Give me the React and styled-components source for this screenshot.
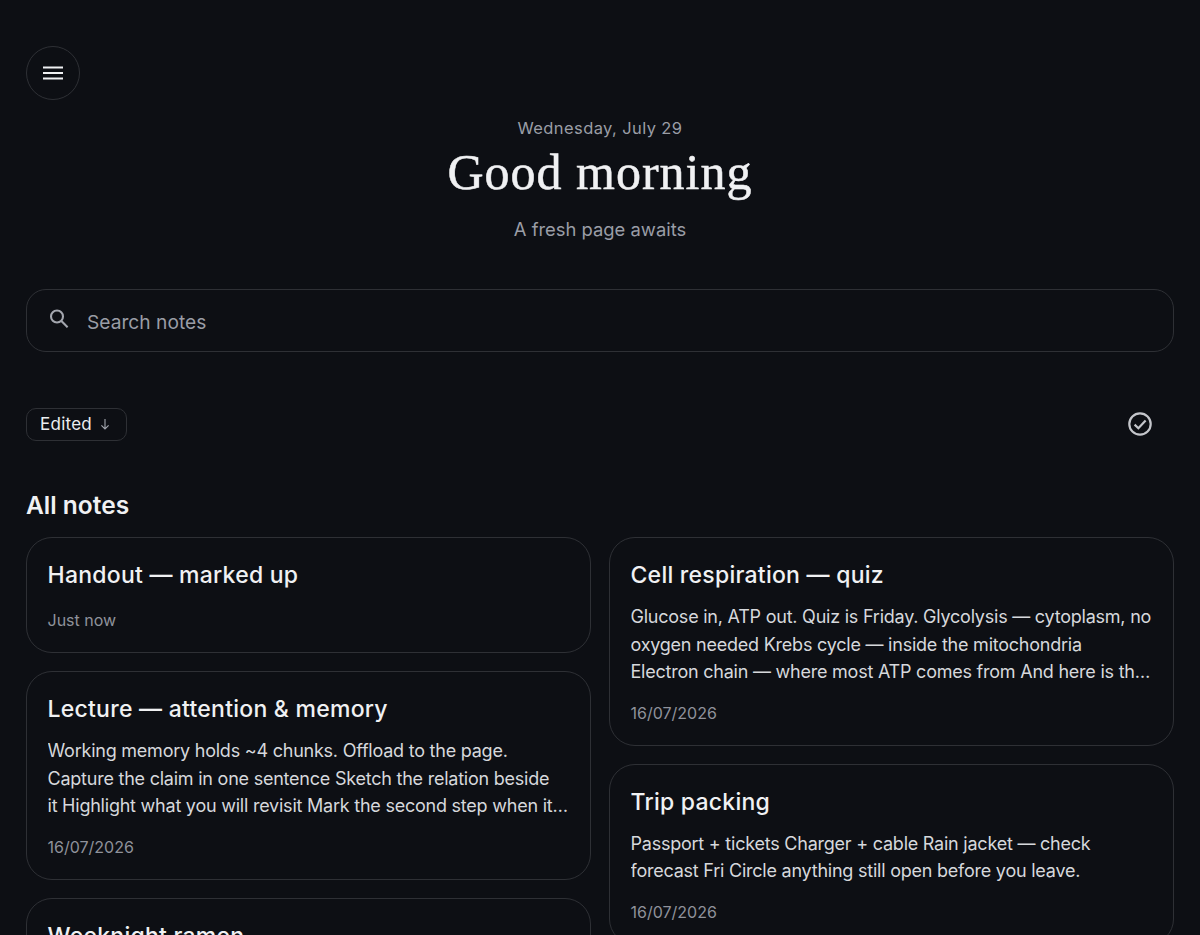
import React from 'react'
import styled, { createGlobalStyle } from 'styled-components'

const GlobalStyle = createGlobalStyle`
  html, body {
    margin: 0;
    height: 935px;
    overflow: hidden;
    background: #0d0f14;
  }
  * { box-sizing: border-box; }
`

const leftNotes = [
  { title: 'Handout — marked up', date: 'Just now' },
  {
    title: 'Lecture — attention & memory',
    body: 'Working memory holds ~4 chunks. Offload to the page. Capture the claim in one sentence Sketch the relation beside it\u00A0Highlight what you will revisit Mark the second step when it matters most',
    date: '16/07/2026',
  },
  {
    title: 'Weeknight ramen',
    body: 'Soft egg, scallions, chili oil. Simmer the broth slowly.',
    date: '16/07/2026',
  },
]

const rightNotes = [
  {
    title: 'Cell respiration — quiz',
    body: 'Glucose in, ATP out. Quiz is Friday. Glycolysis — cytoplasm, no oxygen needed Krebs cycle — inside the mitochondria Electron chain — where most ATP comes from And here is the part I keep forgetting',
    date: '16/07/2026',
  },
  {
    title: 'Trip packing',
    body: 'Passport + tickets Charger + cable Rain jacket — check forecast Fri Circle anything still open before you leave.',
    date: '16/07/2026',
  },
]

export default function App() {
  return (
    <Page>
      <GlobalStyle />
      <MenuButton aria-label="Menu">
        <svg width="20" height="14" viewBox="0 0 20 14" fill="none" stroke="#f0f1f3" strokeWidth="2">
          <path d="M0 1.5h20M0 7h20M0 12.5h20" />
        </svg>
      </MenuButton>
      <Greeting>
        <DateLine>Wednesday, July 29</DateLine>
        <Headline>Good morning</Headline>
        <Tagline>A fresh page awaits</Tagline>
      </Greeting>
      <SearchBar>
        <svg width="24" height="24" viewBox="0 0 24 24" fill="none" stroke="#a3a6ae" strokeWidth="2.1">
          <circle cx="10" cy="9.5" r="6" />
          <path d="M14.4 14l6.2 6.2" />
        </svg>
        <SearchInput placeholder="Search notes" />
      </SearchBar>
      <Toolbar>
        <SortChip>
          Edited
          <svg width="12" height="12" viewBox="0 0 12 12" fill="none" stroke="#a3a6ae" strokeWidth="1.1">
            <path d="M6 1v10M2.4 7.4L6 11l3.6-3.6" />
          </svg>
        </SortChip>
        <SelectButton aria-label="Select">
          <svg width="26" height="26" viewBox="0 0 26 26" fill="none" stroke="#c4c6cb" strokeWidth="2.2">
            <circle cx="13" cy="13" r="10.7" />
            <path d="M7.6 13.6l3.8 3.6 7.2-7.6" />
          </svg>
        </SelectButton>
      </Toolbar>
      <SectionTitle>All notes</SectionTitle>
      <Columns>
        {[leftNotes, rightNotes].map((notes, i) => (
          <Column key={i}>
            {notes.map((note) => (
              <NoteCard key={note.title}>
                <NoteTitle>{note.title}</NoteTitle>
                {note.body && <NoteBody>{note.body}</NoteBody>}
                <NoteDate>{note.date}</NoteDate>
              </NoteCard>
            ))}
          </Column>
        ))}
      </Columns>
    </Page>
  )
}

const Page = styled.main`
  min-height: 935px;
  padding: 46px 26px 0;
  background: #0d0f14;
  color: #eceef0;
  font-family: Inter, "Noto Sans", sans-serif;
`

const MenuButton = styled.button`
  display: flex;
  align-items: center;
  justify-content: center;
  width: 54px;
  height: 54px;
  padding: 0;
  border: 1px solid #2e3035;
  border-radius: 50%;
  background: transparent;
`

const Greeting = styled.header`
  display: flex;
  flex-direction: column;
  align-items: center;
  margin-top: 17px;
`

const DateLine = styled.div`
  font-size: 16.5px;
  line-height: 22px;
  letter-spacing: 0.4px;
  color: #9a9da6;
`

const Headline = styled.h1`
  margin: 5px 0 1px;
  font-family: "Liberation Serif", serif;
  font-size: 50px;
  line-height: 56px;
  font-weight: 400;
  letter-spacing: 1px;
  -webkit-text-stroke: 0.5px #f0f1f3;
  color: #f0f1f3;
`

const Tagline = styled.div`
  margin-top: 16px;
  font-size: 18.4px;
  line-height: 24px;
  color: #9a9da6;
`

const SearchBar = styled.label`
  display: flex;
  align-items: center;
  gap: 16px;
  height: 63px;
  margin-top: 48px;
  padding: 0 20px;
  border: 1px solid #2e3035;
  border-radius: 20px;
  svg { margin-top: -4px; }
`

const SearchInput = styled.input`
  flex: 1;
  padding: 2px 0 0;
  border: 0;
  outline: 0;
  background: transparent;
  color: #eceef0;
  font-family: inherit;
  font-size: 19.2px;
  &::placeholder { color: #9a9da6; opacity: 1; }
`

const Toolbar = styled.div`
  display: flex;
  align-items: center;
  justify-content: space-between;
  margin-top: 56px;
  padding-right: 21px;
`

const SortChip = styled.button`
  display: flex;
  align-items: center;
  gap: 7px;
  height: 33px;
  padding: 0 15px 1px 13px;
  border: 1px solid #2e3035;
  border-radius: 10px;
  background: transparent;
  color: #eceef0;
  font-family: inherit;
  font-size: 17px;
  letter-spacing: 0.25px;
`

const SelectButton = styled.button`
  display: flex;
  padding: 0 0 1px;
  border: 0;
  background: transparent;
`

const SectionTitle = styled.h2`
  margin: 47px 0 0;
  font-size: 24.5px;
  line-height: 34px;
  font-weight: 600;
  color: #f0f1f3;
`

const Columns = styled.div`
  display: grid;
  grid-template-columns: 1fr 1fr;
  gap: 18px;
  margin-top: 15px;
`

const Column = styled.div`
  display: flex;
  flex-direction: column;
  gap: 18px;
`

const NoteCard = styled.article`
  padding: 20px 21px 21px 20.5px;
  border: 1px solid #2e3035;
  border-radius: 26px;
`

const NoteTitle = styled.h3`
  margin: 0;
  font-size: 23px;
  line-height: 34px;
  font-weight: 500;
  letter-spacing: 0.25px;
  color: #f0f1f3;
`

const NoteBody = styled.p`
  display: -webkit-box;
  -webkit-box-orient: vertical;
  -webkit-line-clamp: 3;
  overflow: hidden;
  margin: 11px 0 0;
  font-size: 18px;
  line-height: 27.5px;
  letter-spacing: -0.23px;
  color: #d6d8dc;
`

const NoteDate = styled.div`
  margin-top: 16px;
  font-size: 16px;
  line-height: 22px;
  color: #8f929b;
  ${NoteTitle} + & { margin-top: 17px; }
`
